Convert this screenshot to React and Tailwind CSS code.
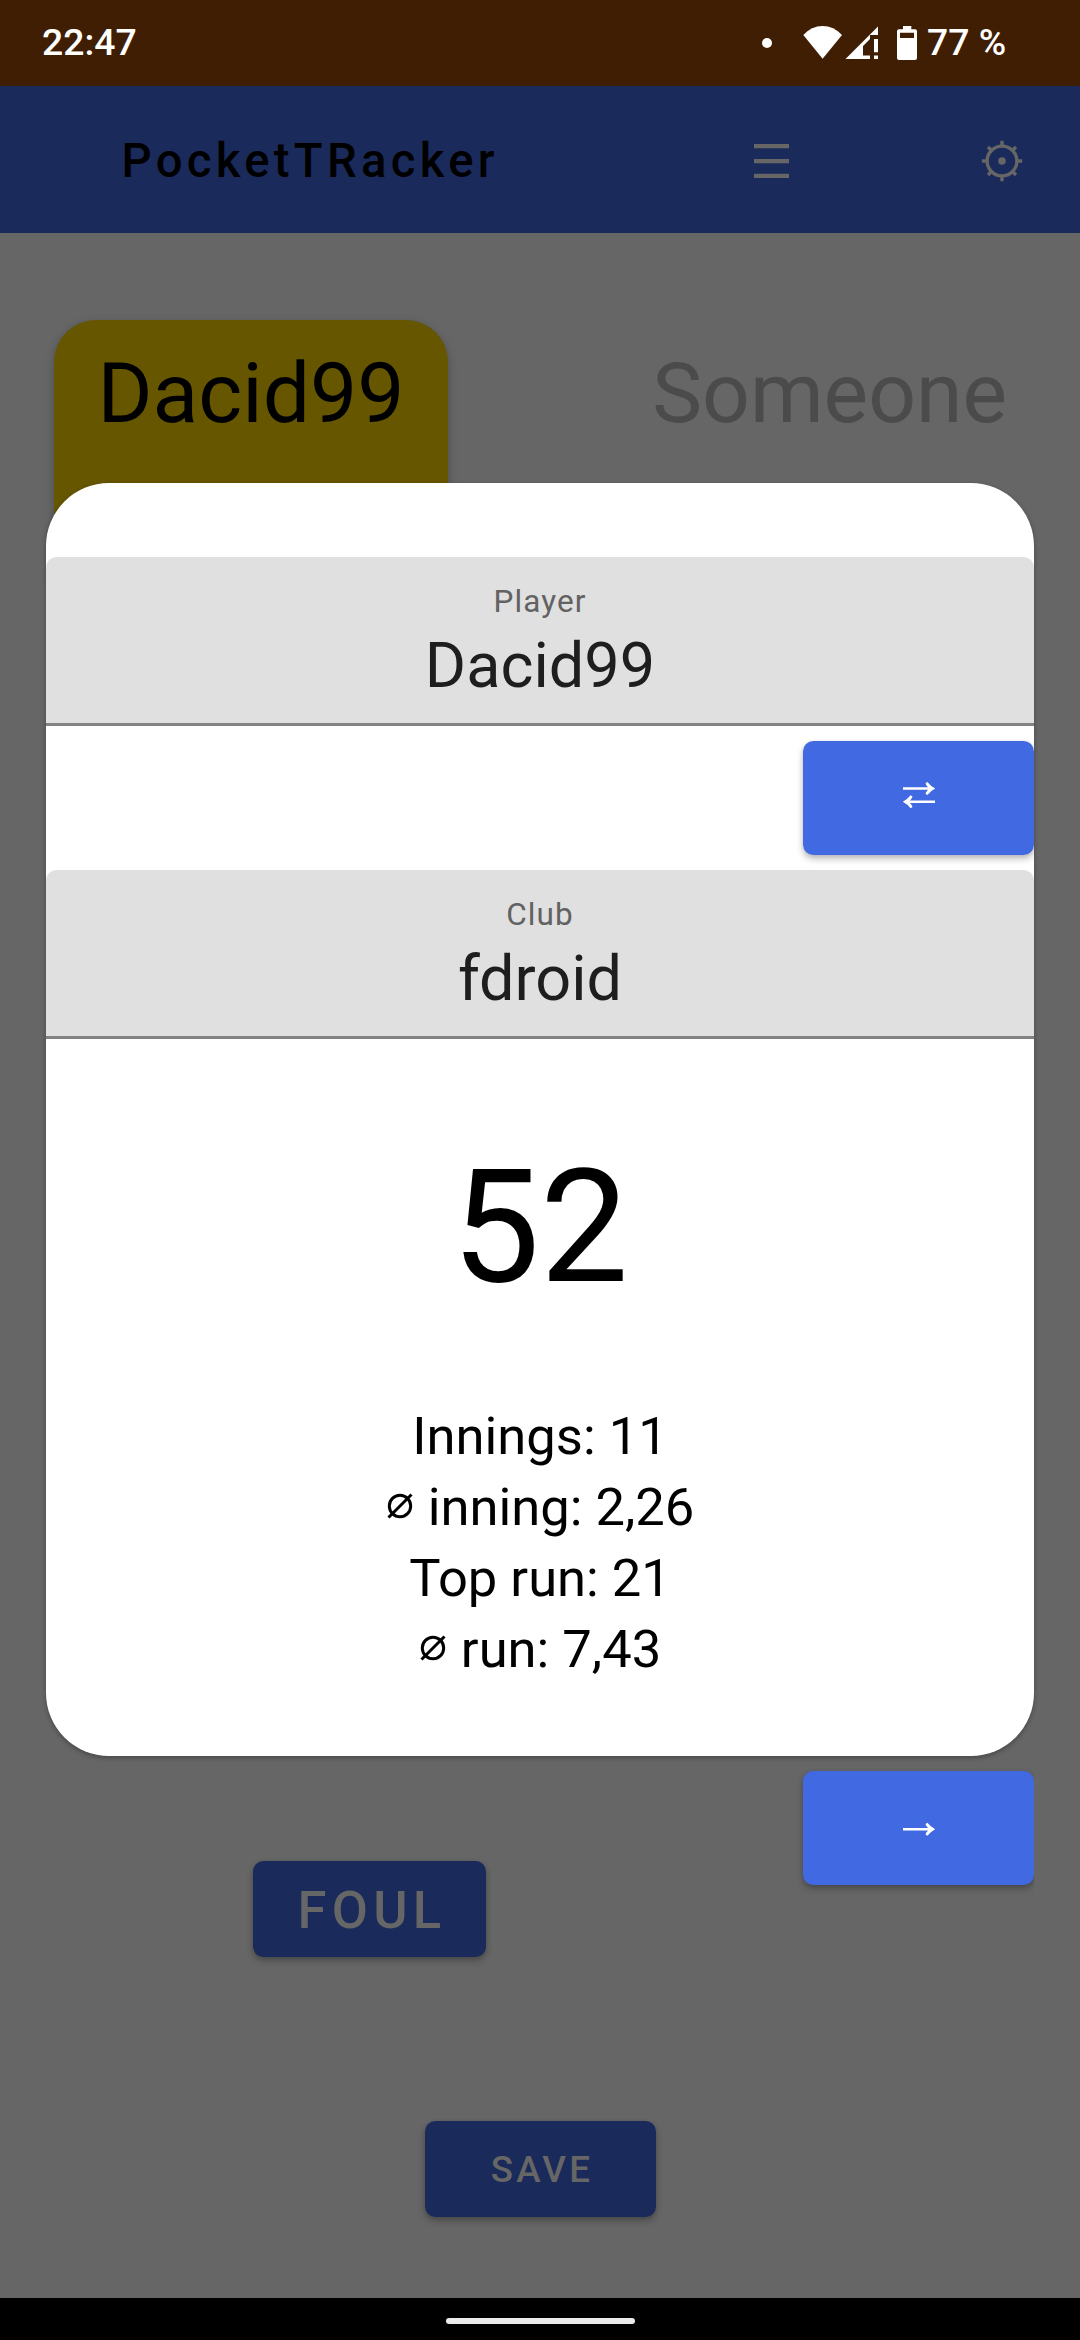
const shadow = "shadow-[0_4px_7px_rgba(0,0,0,0.24),0_1px_4px_rgba(0,0,0,0.1)]";

function StatusBar() {
  return (
    <div className="flex h-[86px] items-center bg-[#401e04] pl-[42px] pr-[74px] text-[37.3px] font-medium text-white">
      <span>22:47</span>
      <svg className="ml-auto" width="160" height="40" viewBox="760 22 160 40" fill="white">
        <circle cx="767" cy="42" r="5" />
        <path d="M803.300 34Q811.500 25 822.600 25T842 34L822.600 57.700Z" />
        <path d="M845.500 58L878 25.500V34H870V38L863 45V54.500H870V58ZM874 38H878V51.300H874ZM874 54.500H878V58H874Z" />
        <path fillRule="evenodd" d="M903 25H911.300V28.300H915Q917 28.300 917 30.300V57Q917 59 915 59H899Q897 59 897 57V30.300Q897 28.300 899 28.300H903ZM900 31.800V37H914V31.800Z" />
      </svg>
      <span className="ml-[7px] w-[79px] whitespace-pre">77 %</span>
    </div>
  );
}

function TopBar() {
  return (
    <header className="flex h-[147px] items-center bg-[#1a2a5a] pl-[121.500px] pr-[57px] pt-[2px]">
      <h1 className="pt-[2px] text-[47.25px] font-medium tracking-[4.3px] text-black">PocketTRacker</h1>
      <svg className="ml-auto" width="36" height="36" viewBox="0 0 36 36" fill="#666">
        <path d="M1 1h35v4.300h-35zM1 15.900h35v4.300h-35zM1 30.800h35v4.200h-35z" />
      </svg>
      <svg className="ml-[192px]" width="42" height="42" viewBox="-21 -21 42 42" fill="none" stroke="#666" strokeWidth="3.4">
        <circle r="14.900" />
        <circle r="3.800" fill="#666" stroke="none" />
        <path d="M0-20.200V-15M0 20.200V15M-20.200 0H-15M20.200 0H15M-14-14L-10.500-10.500M14-14L10.500-10.500M-14 14L-10.500 10.500M14 14L10.500 10.500" />
      </svg>
    </header>
  );
}

function Field({ label, value }) {
  return (
    <div className="h-[169px] rounded-t-[10.5px] border-b-[3px] border-[#838383] bg-[#e0e0e0] pt-[27px] text-center">
      <div className="text-[31.5px] leading-[36px] tracking-[1.05px] text-[#626262]">{label}</div>
      <div className="mt-[10px] text-[63px] leading-[72px] text-[#1e1e1e]">{value}</div>
    </div>
  );
}

function ArrowButton({ children }) {
  return (
    <div className="flex justify-end [clip-path:inset(-20px_0_-20px_-20px)]">
      <div className={`flex h-[114px] w-[231px] items-center justify-center rounded-[10.5px] bg-[#4169e1] ${shadow}`}>
        <svg width="34" height="32" viewBox="0 0 34 32" fill="white">{children}</svg>
      </div>
    </div>
  );
}

function Arrow({ transform }) {
  return (
    <path
      transform={transform}
      d="M1-1.200H26Q24-3.300 23.500-5.200L25.400-6.500Q28.500-2.500 33.200 0Q28.500 2.500 25.400 6.500L23.500 5.200Q24 3.300 26 1.200H1Z"
    />
  );
}

function Diameter() {
  return (
    <svg className="mr-[14px] inline-block align-[5px]" width="28" height="28" viewBox="-14 -14 28 28" fill="none" stroke="black" strokeWidth="3">
      <circle r="10.700" />
      <path d="M-11.500 11.500L11.500-11.500" />
    </svg>
  );
}

function Dialog() {
  return (
    <div className="absolute left-[46px] top-[483px] flex w-[988px] flex-col">
      <section className="flex h-[1273px] flex-col rounded-[63px] bg-white pt-[74px] text-black shadow-[0_2px_5px_rgba(0,0,0,0.3)]">
        <Field label="Player" value="Dacid99" />
        <div className="h-[144px] pt-[15px]">
          <ArrowButton>
            <Arrow transform="translate(0 6.500)" />
            <Arrow transform="translate(34 19.800) scale(-1 1)" />
          </ArrowButton>
        </div>
        <Field label="Club" value="fdroid" />
        <div className="mt-[96px] text-center text-[157.5px] leading-[184px]">52</div>
        <div className="mt-[82px] text-center text-[52.5px] leading-[71px]">
          <p>Innings: 11</p>
          <p><Diameter />inning: 2,26</p>
          <p>Top run: 21</p>
          <p><Diameter />run: 7,43</p>
        </div>
      </section>
      <div className="mt-[15px]">
        <ArrowButton>
          <Arrow transform="translate(0 17.300)" />
        </ArrowButton>
      </div>
    </div>
  );
}

export default function App() {
  return (
    <div className="relative flex h-[2340px] w-[1080px] flex-col overflow-hidden bg-[#666] font-['Roboto',sans-serif]">
      <StatusBar />
      <TopBar />
      <main className="flex flex-1 flex-col">
        <div className="mt-[87px] flex items-start justify-between pl-[54px] pr-[73px] text-[84px] leading-[98px]">
          <div className="h-[300px] w-[394px] rounded-[42px] bg-[#665600] pt-[25px] text-center text-black shadow-[0_3px_10px_rgba(0,0,0,0.25)]">Dacid99</div>
          <div className="pt-[25px] text-[#4b4b4b]">Someone</div>
        </div>
        <div className={`ml-[253px] mt-[1241px] flex h-[96px] w-[233px] items-center justify-center rounded-[10.5px] bg-[#1a2a5a] pl-[5px] pt-[2px] text-[52.5px] font-medium tracking-[5.25px] text-[#666] ${shadow}`}>FOUL</div>
        <div className={`ml-[425px] mt-[164px] flex h-[96px] w-[231px] items-center justify-center rounded-[10.5px] bg-[#1a2a5a] pl-[3px] pt-[2px] text-[36.75px] font-medium tracking-[3.28px] text-[#666] ${shadow}`}>SAVE</div>
      </main>
      <footer className="flex h-[42px] justify-center bg-black pt-5">
        <div className="h-[6px] w-[189px] rounded-full bg-[#ebebeb]" />
      </footer>
      <Dialog />
    </div>
  );
}
